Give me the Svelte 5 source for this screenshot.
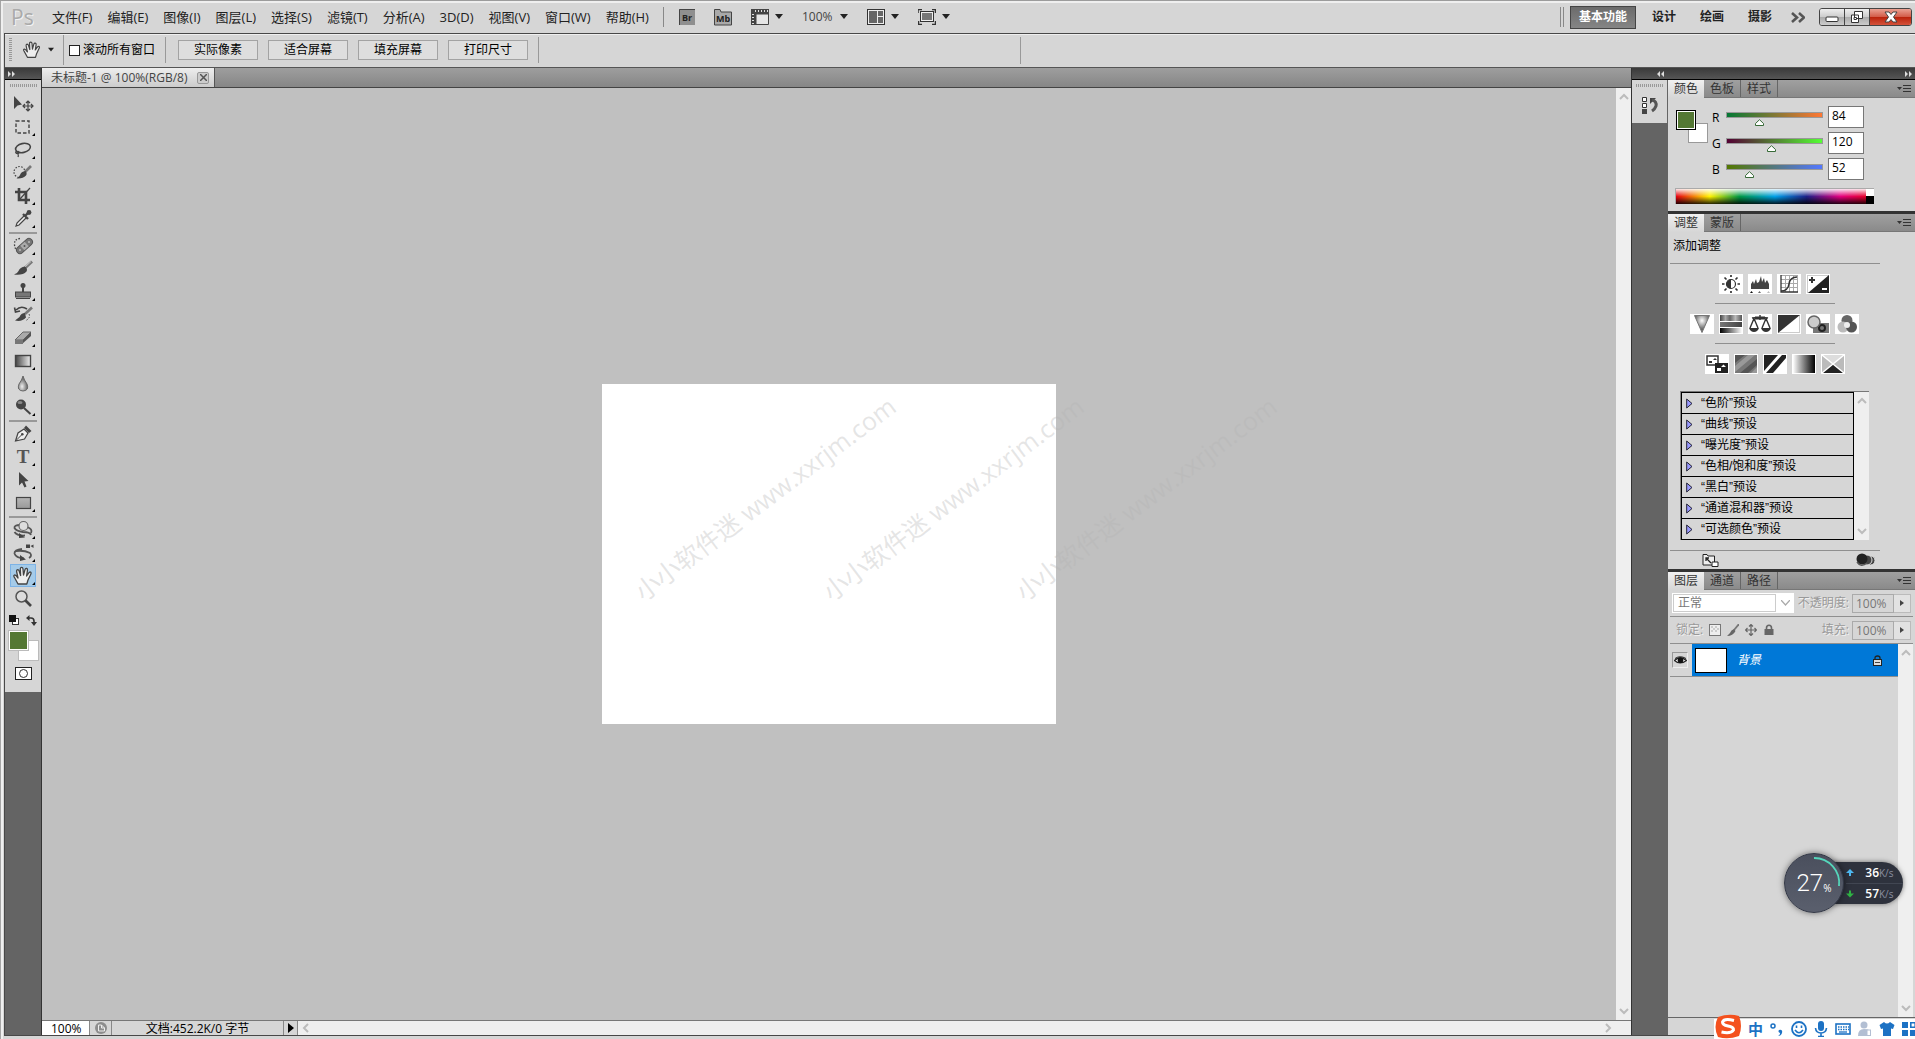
<script>
  const menus = ['文件(F)', '编辑(E)', '图像(I)', '图层(L)', '选择(S)', '滤镜(T)', '分析(A)', '3D(D)', '视图(V)', '窗口(W)', '帮助(H)'];
  const viewButtons = ['实际像素', '适合屏幕', '填充屏幕', '打印尺寸'];
  const workspaces = ['设计', '绘画', '摄影'];
  const presets = ['色阶', '曲线', '曝光度', '色相/饱和度', '黑白', '通道混和器', '可选颜色'];
  const watermarks = [1, 2, 3];

  let channels = $state([
    { name: 'R', value: 84, from: '#047834', to: '#ff7834' },
    { name: 'G', value: 120, from: '#540034', to: '#54ff34' },
    { name: 'B', value: 52, from: '#547800', to: '#5478ff' }
  ]);

  const dark = '#444';
  const hand = `<path d="M7 20 L3.5 13.5 Q2 11.5 3.6 11 Q5 10.8 6.5 13.5 L7 14 L5.6 7.5 Q5.4 5.8 6.6 5.6 Q7.8 5.6 8.2 7.2 L9.6 11.5 L9.3 5 Q9.3 3.4 10.6 3.4 Q11.9 3.4 12 5 L12.5 11 L14 5.6 Q14.5 4.2 15.6 4.5 Q16.7 4.8 16.5 6.2 L15.6 12 L18 8.6 Q19 7.6 19.8 8.2 Q20.5 9 19.8 10.2 L17 16 L15.8 20 Z" fill="#eee" stroke="${dark}" stroke-width="1.3" stroke-linejoin="round"/>`;

  const groups = [
    [
      { id: 'move', label: '移动工具', solo: true, art: `<path d="M3 4 L3 17 L6.5 13.5 L11 12.5 Z" fill="${dark}"/><path d="M17 9 V19 M12 14 H22 M15 11 L17 9 L19 11 M15 17 L17 19 L19 17 M14 12 L12 14 L14 16 M20 12 L22 14 L20 16" fill="none" stroke="${dark}" stroke-width="1.2"/>` },
      { id: 'marquee', label: '矩形选框工具', art: `<rect x="5" y="6" width="13" height="12" fill="none" stroke="${dark}" stroke-width="1.4" stroke-dasharray="3.5 2"/>` },
      { id: 'lasso', label: '套索工具', art: `<ellipse cx="12" cy="10" rx="7.5" ry="4.5" transform="rotate(-12 12 10)" fill="none" stroke="${dark}" stroke-width="1.6"/><path d="M6 13 Q3.5 14 5.5 15.5 Q8 16 8 14 Q7 12.5 6 14 Q8 17 7 19" fill="none" stroke="${dark}" stroke-width="1.2"/>` },
      { id: 'quick', label: '快速选择工具', art: `<circle cx="8.5" cy="11" r="5.5" fill="none" stroke="${dark}" stroke-width="1.2" stroke-dasharray="1.5 1.5"/><path d="M20 5 L14 11" stroke="#777" stroke-width="2.6"/><path d="M14.5 10 Q10 10.5 9 14 Q8 16.5 5.5 17.5 Q12 18 15 14.5 Q16.5 12.5 14.5 10Z" fill="${dark}"/>` },
      { id: 'crop', label: '裁剪工具', art: `<path d="M8 4 V16 H19 M4 8 H15 V20" fill="none" stroke="${dark}" stroke-width="2.6"/><path d="M9 15 L19 4" stroke="${dark}" stroke-width="1.2"/>` },
      { id: 'eyedropper', label: '吸管工具', art: `<path d="M13 9 L6 16 L5 19 L8 18 L15 11" fill="#eee" stroke="${dark}" stroke-width="1.2"/><path d="M12 7 L17 12 M14 9 L17.5 5.5" stroke="${dark}" stroke-width="2.4"/><circle cx="18" cy="5.5" r="2.4" fill="${dark}"/>` }
    ],
    [
      { id: 'heal', label: '污点修复画笔工具', art: `<path d="M9 4.5 Q3 5 3.5 11 Q4 15 6 16.5" fill="none" stroke="${dark}" stroke-width="1.3" stroke-dasharray="1.5 1.5"/><rect x="4" y="8.5" width="19" height="7" rx="3.5" transform="rotate(-42 13.5 12)" fill="#777" stroke="#555"/><rect x="10.5" y="9" width="6" height="6" transform="rotate(-42 13.5 12)" fill="#aaa"/><circle cx="9" cy="16" r="1" fill="#bbb"/><circle cx="18" cy="8" r="1" fill="#bbb"/><circle cx="13.5" cy="12" r="1" fill="#555"/>` },
      { id: 'brush', label: '画笔工具', art: `<path d="M21 4.5 L14 11" stroke="#777" stroke-width="3"/><path d="M20 4.5 L14 10" stroke="#ccc" stroke-width="1"/><path d="M14 9.5 Q9 10 7.5 14 Q6.5 16.5 3 17.5 Q12 18.5 15.5 14.5 Q17 12 14 9.5Z" fill="${dark}"/>` },
      { id: 'stamp', label: '仿制图章工具', art: `<circle cx="12" cy="5.5" r="2.5" fill="${dark}"/><path d="M11 7 H13 V12 H11Z" fill="${dark}"/><rect x="4.5" y="12" width="15" height="5" fill="#777" stroke="${dark}"/><path d="M5 18.5 H19" stroke="${dark}"/>` },
      { id: 'history', label: '历史记录画笔工具', art: `<path d="M5 7 Q10 2 16 6 M3.5 4.5 L4.5 9 L9 8" fill="none" stroke="${dark}" stroke-width="1.6"/><path d="M21 4.5 L14 11" stroke="#777" stroke-width="2.6"/><path d="M14 10 Q10 10 8.5 14 L4 17.5 Q11 19 15 14.5Z" fill="${dark}"/><path d="M18 11 Q20 15 14 18" fill="none" stroke="${dark}" stroke-dasharray="1.5 1.5"/>` },
      { id: 'eraser', label: '橡皮擦工具', art: `<path d="M4 14 L12 6 H20 L12 14 Z" fill="#aaa" stroke="#666"/><path d="M4 14 V18 H11 L20 10 V6 L12 14Z" fill="#555"/><path d="M4 14 H12 V18 H4Z" fill="#777"/>` },
      { id: 'gradient', label: '渐变工具', art: `<defs><linearGradient id="tg"><stop offset="0" stop-color="#444"/><stop offset="1" stop-color="#eee"/></linearGradient></defs><rect x="4.5" y="6.5" width="15" height="11" fill="url(#tg)" stroke="${dark}" stroke-width="1.4"/>` },
      { id: 'blur', label: '模糊工具', art: `<defs><radialGradient id="tb" cx=".4" cy=".7"><stop offset="0" stop-color="#eee"/><stop offset="1" stop-color="#777"/></radialGradient></defs><path d="M12 4 Q13 8 16 12 Q18.5 18.5 12 19 Q5.5 18.5 8 12 Q11 8 12 4Z" fill="url(#tb)" stroke="#666"/>` },
      { id: 'dodge', label: '减淡工具', art: `<circle cx="10" cy="9.5" r="5" fill="${dark}"/><path d="M13 13 L19.5 19" stroke="${dark}" stroke-width="2"/><ellipse cx="9" cy="7.5" rx="2.5" ry="1.5" fill="#888"/>` }
    ],
    [
      { id: 'pen', label: '钢笔工具', art: `<path d="M4.5 19 L7 11 L13 7 L17 11 L13.5 17 Z" fill="#eee" stroke="${dark}" stroke-width="1.2"/><path d="M5 18.5 L11 12.5" stroke="${dark}"/><circle cx="11.3" cy="12.3" r="1.3" fill="${dark}"/><path d="M13 6 L15 3.5 L20.5 9 L18 11 Z" fill="${dark}"/>` },
      { id: 'type', label: '横排文字工具', text: 'T' },
      { id: 'path', label: '路径选择工具', art: `<path d="M8 4 L8 17.5 L11 14.5 L13.5 19.5 L15.5 18.5 L13.5 13.5 L17.5 13 Z" fill="${dark}"/>` },
      { id: 'shape', label: '矩形工具', art: `<defs><linearGradient id="ts" x2="0" y2="1"><stop offset="0" stop-color="#b5b5b5"/><stop offset="1" stop-color="#999"/></linearGradient></defs><rect x="5.5" y="6.5" width="14" height="11" fill="url(#ts)" stroke="${dark}" stroke-width="1.2"/>` }
    ],
    [
      { id: 'rotate3d', label: '3D 旋转工具', art: `<path d="M9 7 Q3 7 3.5 10 Q5 13 12 14 Q19 14 20 17 M16 9 Q22 11 20 15 M14 17.5 Q6 18 3.5 14" fill="none" stroke="#555" stroke-width="1.8"/><circle cx="12.5" cy="8" r="4.5" fill="#ddd" stroke="#666" stroke-width="1.2"/><path d="M8 15 L14 19.5 L8 20 Z" fill="${dark}"/>` },
      { id: 'orbit3d', label: '3D 环绕工具', art: `<path d="M11 8 Q3 9 3.5 12.5 Q5 17 13 17.5 M5 10 Q13 9 19 12 Q21.5 15 18 17" fill="none" stroke="#555" stroke-width="1.8"/><path d="M15 3.5 H19 V7 H15Z M19.5 5 L22.5 3.5 V7Z" fill="${dark}"/><path d="M9 14 L15 18.5 L9 20Z" fill="${dark}"/>` },
      { id: 'hand', label: '抓手工具', active: true, art: hand },
      { id: 'zoom', label: '缩放工具', solo: true, art: `<circle cx="10.5" cy="9.5" r="5.5" fill="#ddd" stroke="#555" stroke-width="1.5"/><path d="M14.5 13.5 L20 19" stroke="${dark}" stroke-width="2.6"/>` }
    ]
  ];

  const adjustments = [
    [
      { label: '亮度/对比度', art: `<circle cx="12" cy="10" r="4.5" fill="#fff" stroke="#333" stroke-width="1.2"/><path d="M12 5.5 A4.5 4.5 0 0 0 12 14.5Z" fill="#333"/><path d="M12 1 V3 M12 17 V19 M3 10 H5.5 M18.5 10 H21 M5.5 3.5 L7.5 5.5 M16.5 14.5 L18.5 16.5 M18.5 3.5 L16.5 5.5 M7.5 14.5 L5.5 16.5" stroke="#333" stroke-width="1.7"/>` },
      { label: '色阶', art: `<path d="M3 15 V10 L5 7 L6 10 L8 5 L9 9 L11 8 L13 2 L14 8 L16 4 L17 9 L19 6 L21 10 V15Z" fill="#444"/><path d="M2 19 L3.5 17 L5 19Z" fill="#111"/><path d="M10 19 L11.5 17 L13 19Z" fill="#666"/><path d="M19 19 L20.5 17 L22 19Z" fill="#bbb"/>` },
      { label: '曲线', art: `<path d="M4 1.5 H21 M4 5.5 H21 M4 9.5 H21 M4 13.5 H21 M8.5 1 V18 M12.5 1 V18 M16.5 1 V18 M20.5 1 V18" stroke="#aaa"/><path d="M4 1 V18 H21" fill="none" stroke="#333" stroke-width="1.3"/><path d="M4 17 Q11 17 12 10 Q13 3 20 3" fill="none" stroke="#333" stroke-width="1.5"/>` },
      { label: '曝光度', art: `<rect x="1.5" y="1.5" width="21" height="17" fill="#fff" stroke="#ccc"/><path d="M2 19 L23 1 V19Z" fill="#222"/><path d="M3 6 H9 M6 3 V9" stroke="#333" stroke-width="2"/><path d="M16 15 H21" stroke="#fff" stroke-width="2"/>` }
    ],
    [
      { label: '自然饱和度', art: `<defs><radialGradient id="av" cy=".3"><stop offset="0" stop-color="#fff"/><stop offset="1" stop-color="#666"/></radialGradient></defs><path d="M4.5 1.5 H19.5 L12 18.5Z" fill="url(#av)" stroke="#777"/>` },
      { label: '色相/饱和度', art: `<defs><linearGradient id="ah"><stop offset="0" stop-color="#444"/><stop offset=".25" stop-color="#aaa"/><stop offset=".45" stop-color="#666"/><stop offset=".7" stop-color="#bbb"/><stop offset="1" stop-color="#555"/></linearGradient><linearGradient id="ah2"><stop offset="0" stop-color="#777"/><stop offset="1" stop-color="#444"/></linearGradient><linearGradient id="ah3"><stop offset="0" stop-color="#000"/><stop offset="1" stop-color="#fff"/></linearGradient></defs><rect x="1" y="1" width="22" height="6" fill="url(#ah)"/><rect x="1" y="8" width="22" height="5" fill="url(#ah2)"/><rect x="1" y="14" width="22" height="5" fill="url(#ah3)"/>` },
      { label: '色彩平衡', art: `<path d="M12 1 V6 M4 4 Q8 3 12 4.5 Q16 3 20 4 M6 4.5 L2 14 M6 4.5 L10 14 M18 4.5 L14 14 M18 4.5 L22 14" fill="none" stroke="#333" stroke-width="1.4"/><path d="M7 4 H17" stroke="#333" stroke-width="3"/><path d="M1 14 H11 Q9.5 18 6 18 Q2.5 18 1 14Z M13 14 H23 Q21.5 18 18 18 Q14.5 18 13 14Z" fill="#333"/>` },
      { label: '黑白', art: `<rect x="1.5" y="1.5" width="21" height="17" fill="#fff" stroke="#ccc"/><path d="M1 1 H23 L1 19Z" fill="#333"/>` },
      { label: '照片滤镜', art: `<rect x="7" y="9" width="16" height="10" fill="#777"/><circle cx="16" cy="14" r="4" fill="#222"/><circle cx="16" cy="14" r="2" fill="#777"/><circle cx="8" cy="8" r="6" fill="#ccc" stroke="#666" stroke-width="1.5"/>` },
      { label: '通道混和器', art: `<circle cx="12" cy="6.5" r="5.5" fill="#666"/><circle cx="8" cy="13" r="5.5" fill="#bbb"/><circle cx="16.5" cy="13" r="5.5" fill="#555"/><circle cx="12" cy="11" r="3" fill="#eee"/>` }
    ],
    [
      { label: '反相', art: `<rect x="2" y="2" width="11" height="9" fill="#fff" stroke="#333" stroke-width="1.5"/><path d="M4 9 V7 H7 V9Z M8 6 L10 4 L12 6Z" fill="#333"/><rect x="10" y="9" width="13" height="10" fill="#222"/><path d="M12 17 V14 H16 V17Z M16 13 L18.5 10.5 L21 13Z" fill="#fff"/>` },
      { label: '色调分离', art: `<path d="M1 1 H23 V19 H1Z" fill="#777"/><path d="M1 1 H11 L1 9Z M23 5 L6 19 H14 L23 11Z" fill="#555"/><path d="M14 1 H21 L1 18 V12Z M23 13 V19 H17Z" fill="#999"/>` },
      { label: '阈值', art: `<path d="M1 1 H15 L1 17Z M19 1 H23 V4 L10 19 H3 Z" fill="#222"/>` },
      { label: '渐变映射', art: `<defs><linearGradient id="am"><stop offset="0" stop-color="#fff"/><stop offset="1" stop-color="#000"/></linearGradient></defs><rect x="1" y="1" width="22" height="18" fill="url(#am)"/>` },
      { label: '可选颜色', art: `<path d="M1 1 H23 V19 H1Z" fill="#bbb"/><path d="M1 1 H23 L12 10Z" fill="#ddd"/><path d="M1 19 H23 L12 10Z" fill="#222"/><path d="M1 1 L23 19 M23 1 L1 19" stroke="#fff" stroke-width="1.5"/>` }
    ]
  ];

  const ime = [
    { label: '标点', art: `<circle cx="4" cy="5" r="2" fill="none" stroke="#1d72c4" stroke-width="1.5"/><path d="M10 9 Q14 8 13 12 Q12 15 9 15 Q11.5 13.5 11 12 Q8.5 11 10 9Z" fill="#1d72c4"/>` },
    { label: '表情', art: `<circle cx="8" cy="8" r="7" fill="none" stroke="#1d72c4" stroke-width="1.8"/><path d="M5.5 4.5 V7 M10.5 4.5 V7 M4 9 Q8 14.5 12 9" fill="none" stroke="#1d72c4" stroke-width="1.6"/>` },
    { label: '语音', art: `<rect x="5" y="0" width="6" height="10" rx="3" fill="#1d72c4"/><path d="M2.5 7 Q3 12 8 12 Q13 12 13.5 7 M8 12 V15 M5 15.5 H11" fill="none" stroke="#1d72c4" stroke-width="1.6"/>` },
    { label: '软键盘', art: `<rect x="1" y="3" width="14" height="10" fill="none" stroke="#1d72c4" stroke-width="1.6"/><path d="M3 6 H14 M3 8.5 H14" stroke="#1d72c4" stroke-width="1.5" stroke-dasharray="1.5 1"/><path d="M4 11 H12" stroke="#1d72c4" stroke-width="1.3"/>` },
    { label: '用户', art: `<circle cx="7" cy="4" r="3.5" fill="#b3bfd3"/><path d="M1 15 Q1 8 7 8 Q11 8 12 9 V15Z" fill="#b3bfd3"/><rect x="10" y="9" width="3.5" height="5.5" fill="#fff" stroke="#b3bfd3"/>` },
    { label: '皮肤', art: `<path d="M5 1 Q8 4 11 1 L15.5 4 L14 8 L12 7.5 V15 H4 V7.5 L2 8 L0.5 4Z" fill="#1d72c4"/>` },
    { label: '工具箱', art: `<path d="M1 1 H7 V7 H1Z M1 9 H7 V15 H1Z M9 9 H15 V15 H9Z" fill="#1d72c4"/><path d="M9.8 1.8 H14.2 V6.2 H9.8Z" fill="none" stroke="#1d72c4" stroke-width="1.6"/>` }
  ];
</script>

{#snippet caret()}
  <svg class="caret" viewBox="0 0 8 6" aria-hidden="true"><path d="M0 0 H8 L4 5Z" fill="#222" /></svg>
{/snippet}

{#snippet chevron(d)}
  <svg class="chev" viewBox="0 0 10 10" aria-hidden="true"><path {d} fill="none" stroke="#bcbcbc" stroke-width="2" /></svg>
{/snippet}

{#snippet tabs(names)}
  <div class="tabs" role="tablist">
    {#each names as name, i}
      <button role="tab" aria-selected={i === 0} class:on={i === 0}>{name}</button>
    {/each}
    <button class="panel-menu" aria-label="面板菜单">
      <svg viewBox="0 0 14 8"><path d="M0 2 H5 L2.5 5Z" fill="#333" /><path d="M6 .5 H14 M6 3.5 H14 M6 6.5 H14" stroke="#333" /></svg>
    </button>
  </div>
{/snippet}

<div class="app">
  <header class="menubar">
    <span class="logo">Ps</span>
    <nav class="menus">
      {#each menus as m}<button>{m}</button>{/each}
    </nav>
    <div class="quick">
      <button aria-label="Bridge"><svg width="16" height="16" viewBox="0 0 16 16"><rect width="16" height="16" fill="#8f8f8f" /><path d="M.5 16 V.5 H16" fill="none" stroke="#444" /><text x="3" y="12" class="mini">Br</text></svg></button>
      <button aria-label="Mini Bridge"><svg width="18" height="17" viewBox="0 0 18 17"><path d="M.5 16 V.5 H6 L7 3 H17.5 V16Z" fill="#a9a9a9" stroke="#444" /><text x="2" y="13" class="mini">Mb</text></svg></button>
      <button class="drop" aria-label="查看额外内容"><svg width="18" height="16" viewBox="0 0 18 16"><path d="M0 0 H18 V5 H5 V16 H0Z" fill="#444" /><path d="M5 5 H17.5 V15.5 H5Z" fill="#e6e6e6" stroke="#444" /><path d="M4 2 H17" stroke="#ddd" stroke-width="2" stroke-dasharray="1 2" /><path d="M2 5 V16" stroke="#ddd" stroke-width="2" stroke-dasharray="1 2" /></svg>{@render caret()}</button>
      <button class="drop zoomlevel">100%{@render caret()}</button>
      <button class="drop" aria-label="排列文档"><svg width="18" height="16" viewBox="0 0 18 16"><rect x=".5" y=".5" width="17" height="15" fill="#eee" stroke="#333" /><path d="M2 2 H10 V14 H2Z M11 2 H16 V7 H11Z M11 8 H16 V14 H11Z" fill="#666" /></svg>{@render caret()}</button>
      <button class="drop" aria-label="屏幕模式"><svg width="18" height="16" viewBox="0 0 18 16"><path d="M0 4 V.5 H4 M14 .5 H17.5 V4 M17.5 12 V15.5 H14 M4 15.5 H.5 V12" fill="none" stroke="#333" stroke-width="1.5" /><rect x="2.5" y="2.5" width="13" height="10" fill="#eee" stroke="#333" /><rect x="4" y="4" width="10" height="7" fill="#777" /></svg>{@render caret()}</button>
    </div>
    <div class="modes">
      <span class="double"></span>
      <button class="current">基本功能</button>
      {#each workspaces as w}<button class="ws">{w}</button>{/each}
      <button class="more" aria-label="更多工作区"><svg width="14" height="11" viewBox="0 0 14 11"><path d="M1 1 L6 5.5 L1 10 M8 1 L13 5.5 L8 10" fill="none" stroke="#555" stroke-width="2.6" /></svg></button>
      <div class="window">
        <button aria-label="最小化"><svg width="14" height="12" viewBox="0 0 14 12"><rect x="1" y="6" width="12" height="4.5" rx="1" fill="#fff" stroke="#333" /></svg></button>
        <button aria-label="还原"><svg width="14" height="12" viewBox="0 0 14 12"><path d="M4.5 .5 H12.5 V7.5 H4.5Z M1.5 4 H8.5 V11.5 H1.5Z" fill="#fff" stroke="#333" /><path d="M4 6.5 H6.5 V8.5 H4Z" fill="#fff" stroke="#333" /></svg></button>
        <button class="close" aria-label="关闭"><svg width="14" height="12" viewBox="0 0 14 12"><path d="M1 1 H5 L7 3.5 L9 1 H13 L9.5 6 L13 11 H9 L7 8.5 L5 11 H1 L4.5 6Z" fill="#fff" stroke="#444" /></svg></button>
      </div>
    </div>
  </header>

  <div class="frame">
    <div class="options">
      <span class="vgrip"></span>
      <button class="handbtn" aria-label="抓手工具"><svg width="22" height="22" viewBox="0 0 24 24">{@html hand}</svg>{@render caret()}</button>
      <label class="scrollall"><input type="checkbox" />滚动所有窗口</label>
      <div class="fits">
        {#each viewButtons as b}<button>{b}</button>{/each}
      </div>
      <span class="endrule"></span>
    </div>

    <div class="workspace">
      <aside class="toolcol">
        <div class="dockhead"><svg width="7" height="6" viewBox="0 0 7 6"><path d="M0 0 L3 3 L0 6Z M4 0 L7 3 L4 6Z" fill="#ddd" /></svg></div>
        <div class="toolbox">
          <span class="hgrip"></span>
          {#each groups as group}
            <div class="group">
              {#each group as tool}
                <button class="tool" class:active={tool.active} aria-label={tool.label}>
                  {#if tool.text}<span class="t">{tool.text}</span>{:else}<svg width="24" height="23" viewBox="0 0 24 23">{@html tool.art}</svg>{/if}
                  {#if !tool.solo}<svg class="corner" width="3" height="3" viewBox="0 0 3 3"><path d="M3 0 V3 H0Z" fill="#000" /></svg>{/if}
                </button>
              {/each}
            </div>
          {/each}
          <div class="minis">
            <button aria-label="默认颜色"><svg width="11" height="11" viewBox="0 0 11 11"><rect x="3.5" y="3.5" width="6" height="6" fill="#fff" stroke="#333" /><rect width="7" height="7" fill="#111" /></svg></button>
            <button aria-label="切换颜色"><svg width="11" height="11" viewBox="0 0 11 11"><path d="M2 3 H5 Q8 3 8 6 V8" fill="none" stroke="#333" stroke-width="1.6" /><path d="M0 3 L3.5 0 V6Z M5 7 H11 L8 11Z" fill="#333" /></svg></button>
          </div>
          <div class="swatches">
            <button class="bg" aria-label="背景色"></button>
            <button class="fg" aria-label="前景色"></button>
          </div>
          <button class="qmask" aria-label="快速蒙版"><svg width="17" height="13" viewBox="0 0 17 13"><rect x=".5" y=".5" width="16" height="12" fill="#fff" stroke="#222" /><circle cx="8.5" cy="6.5" r="4" fill="#fff" stroke="#333" /></svg></button>
        </div>
      </aside>

      <main class="doc">
        <div class="doctabs">
          <div class="doctab">未标题-1 @ 100%(RGB/8)
            <button aria-label="关闭文档"><svg width="7" height="7" viewBox="0 0 7 7"><path d="M0 0 L7 7 M7 0 L0 7" stroke="#555" stroke-width="1.5" /></svg></button>
          </div>
        </div>
        <div class="view">
          <div class="canvas">
            <div class="paper">
              {#each watermarks as n}<span class="wm wm{n}">小小软件迷 www.xxrjm.com</span>{/each}
            </div>
          </div>
          <div class="vscroll">{@render chevron('M1 7 L5 3 L9 7')}{@render chevron('M1 3 L5 7 L9 3')}</div>
        </div>
        <footer class="status">
          <input class="pct" aria-label="缩放比例" value="100%" />
          <button class="info" aria-label="版本"><svg width="12" height="12" viewBox="0 0 12 12"><circle cx="6" cy="6" r="6" fill="#8d8d8d" /><path d="M3.5 3 H6.5 L9.5 6 V9 H3.5Z M6.5 3 V6 H9.5" fill="none" stroke="#eee" /></svg></button>
          <span class="size">文档:452.2K/0 字节</span>
          <button class="play" aria-label="显示"><svg width="6" height="10" viewBox="0 0 6 10"><path d="M0 0 L6 5 L0 10Z" fill="#000" /></svg></button>
          <div class="hscroll">{@render chevron('M7 1 L3 5 L7 9')}{@render chevron('M3 1 L7 5 L3 9')}</div>
        </footer>
      </main>

      <aside class="icondock">
        <div class="dockhead right"><svg width="7" height="6" viewBox="0 0 7 6"><path d="M3 0 L0 3 L3 6Z M7 0 L4 3 L7 6Z" fill="#ddd" /></svg></div>
        <div class="dockbox">
          <span class="hgrip"></span>
          <button aria-label="历史记录"><svg width="18" height="18" viewBox="0 0 18 18"><path d="M1.5 1.5 H5.5 V5.5 H1.5Z M1.5 7.5 H5.5 V11.5 H1.5Z" fill="#fff" stroke="#333" /><path d="M1 13 H6 V18 H1Z" fill="#444" /><path d="M9 8 V2 H15 Z" fill="#444" /><path d="M11 4 Q16 5 15 10 Q14 13 11 15" fill="none" stroke="#555" stroke-width="3" /></svg></button>
        </div>
      </aside>

      <aside class="panels">
        <div class="dockhead right"><svg width="7" height="6" viewBox="0 0 7 6"><path d="M0 0 L3 3 L0 6Z M4 0 L7 3 L4 6Z" fill="#ddd" /></svg></div>
        <section class="panel">
          {@render tabs(['颜色', '色板', '样式'])}
          <div class="colorbody">
            <div class="swpair"><button class="cbg" aria-label="背景色"></button><button class="cfg" aria-label="前景色"></button></div>
            <div class="sliders">
              {#each channels as c}
                <label class="channel">
                  <span>{c.name}</span>
                  <input type="range" min="0" max="255" bind:value={c.value} style:--from={c.from} style:--to={c.to} aria-label="{c.name} 滑块" />
                  <input type="text" bind:value={c.value} />
                </label>
              {/each}
            </div>
          </div>
          <div class="spectrum"><span></span></div>
        </section>

        <section class="panel">
          {@render tabs(['调整', '蒙版'])}
          <div class="adjust">
            <h2>添加调整</h2>
            {#each adjustments as row}
              <div class="adjrow">
                {#each row as a}
                  <button aria-label={a.label}><svg width="24" height="20" viewBox="0 0 24 20">{@html a.art}</svg></button>
                {/each}
              </div>
            {/each}
            <div class="presets">
              <ul>
                {#each presets as p}
                  <li><svg width="7" height="11" viewBox="0 0 7 11"><path d="M.7 1 L6 5.5 L.7 10Z" fill="#99f" stroke="#223" /></svg>“{p}”预设</li>
                {/each}
              </ul>
              <div class="pscroll">{@render chevron('M1 7 L5 3 L9 7')}{@render chevron('M1 3 L5 7 L9 3')}</div>
            </div>
            <div class="adjfoot">
              <button aria-label="展开视图"><svg width="17" height="14" viewBox="0 0 17 14"><path d="M1 12 V1.5 H5 L6 3 H12.5 V12Z" fill="#eee" stroke="#222" /><path d="M4 5 L9 10 M4 8 V5 H7" fill="none" stroke="#222" stroke-width="1.3" /><path d="M10 9 H16 V13.5 H10Z" fill="#fff" stroke="#222" /></svg></button>
              <button aria-label="剪切到图层"><svg width="20" height="14" viewBox="0 0 20 14"><circle cx="14.5" cy="7.5" r="4.5" fill="#444" stroke="#ddd" /><circle cx="11" cy="7" r="5" fill="#444" stroke="#ddd" /><circle cx="6" cy="6" r="5.5" fill="#222" /><path d="M1 9 Q5 15 11 10" fill="none" stroke="#555" stroke-width="1.5" /></svg></button>
            </div>
          </div>
        </section>

        <section class="panel layers">
          {@render tabs(['图层', '通道', '路径'])}
          <div class="lrow">
            <div class="blend">
              <select disabled aria-label="混合模式"><option>正常</option></select>
              <svg width="9" height="6" viewBox="0 0 9 6"><path d="M0 0 L4.5 5 L9 0" fill="none" stroke="#aaa" stroke-width="1.3" /></svg>
            </div>
            <label class="amount">不透明度:<input value="100%" disabled /><button disabled aria-label="不透明度滑块"><svg width="4" height="6" viewBox="0 0 4 6"><path d="M0 0 L4 3 L0 6Z" fill="#444" /></svg></button></label>
          </div>
          <div class="lrow">
            <div class="locks">锁定:
              <button aria-label="锁定透明像素"><svg width="12" height="12" viewBox="0 0 12 12"><rect x=".5" y=".5" width="11" height="11" fill="#eee" stroke="#777" /><path d="M2 2 H4 V4 H2Z M6 2 H8 V4 H6Z M4 4 H6 V6 H4Z M8 4 H10 V6 H8Z M2 6 H4 V8 H2Z M6 6 H8 V8 H6Z" fill="#ccc" /></svg></button>
              <button aria-label="锁定图像像素"><svg width="12" height="12" viewBox="0 0 12 12"><path d="M12 0 L7 6" stroke="#777" stroke-width="1.8" /><path d="M7 5 Q4 6 3 9 L0 12 Q6 12 8.5 7Z" fill="#666" /></svg></button>
              <button aria-label="锁定位置"><svg width="12" height="12" viewBox="0 0 12 12"><path d="M6 1 V11 M1 6 H11 M4 2.5 L6 .5 L8 2.5 M4 9.5 L6 11.5 L8 9.5 M2.5 4 L.5 6 L2.5 8 M9.5 4 L11.5 6 L9.5 8" fill="none" stroke="#666" stroke-width="1.2" /></svg></button>
              <button aria-label="锁定全部"><svg width="12" height="12" viewBox="0 0 12 12"><path d="M3.5 6 V4 Q3.5 1.2 6 1.2 Q8.5 1.2 8.5 4 V6" fill="none" stroke="#666" stroke-width="1.6" /><rect x="1.5" y="5" width="9" height="6" fill="#666" /></svg></button>
            </div>
            <label class="amount">填充:<input value="100%" disabled /><button disabled aria-label="填充滑块"><svg width="4" height="6" viewBox="0 0 4 6"><path d="M0 0 L4 3 L0 6Z" fill="#444" /></svg></button></label>
          </div>
          <div class="layerlist">
            <div class="rows">
              <div class="layer">
                <button class="eye" aria-label="可见性"><svg width="13" height="9" viewBox="0 0 13 9"><path d="M.5 4.5 Q6 -1 12.5 4.5 Q6 9.5 .5 4.5Z" fill="#fff" stroke="#222" stroke-width="1.2" /><circle cx="6.5" cy="4.3" r="2.8" fill="#111" /><path d="M1 2.5 Q6 -1 12 2.5" fill="none" stroke="#222" /></svg></button>
                <div class="selected">
                  <span class="thumb"></span>
                  <em>背景</em>
                  <svg width="9" height="11" viewBox="0 0 9 11"><path d="M2 5 V3 Q2 1 4.5 1 Q7 1 7 3 V5" fill="none" stroke="#222" stroke-width="1.3" /><rect x=".5" y="4.5" width="8" height="6" fill="#ddd" stroke="#222" /><path d="M2 7.5 H7" stroke="#444" /></svg>
                </div>
              </div>
            </div>
            <div class="lscroll">{@render chevron('M1 7 L5 3 L9 7')}{@render chevron('M1 3 L5 7 L9 3')}</div>
          </div>
        </section>
      </aside>
    </div>
  </div>

  <div class="monitor">
    <div class="pill">
      <p><svg width="8" height="8" viewBox="0 0 8 8"><path d="M4 0 L8 4 H5 V7 H3 V4 H0Z" fill="#4db8f0" /></svg><b>36</b><span>K/s</span></p>
      <p><svg width="8" height="8" viewBox="0 0 8 8"><path d="M4 7.5 L0 3.5 H3 V.5 H5 V3.5 H8Z" fill="#2fb344" /></svg><b>57</b><span>K/s</span></p>
    </div>
    <div class="disc">
      <svg viewBox="0 0 60 60"><path d="M30 5 A25 25 0 0 1 55 33" fill="none" stroke="#55d6bb" stroke-width="1.8" /></svg>
      <strong>27</strong><small>%</small>
    </div>
  </div>

  <div class="ime">
    <svg class="sogou" width="28" height="25" viewBox="0 0 28 25"><path d="M4 3 Q15 -1 25 2 Q29 12 25 22 Q14 26 4 23 Q-1 13 4 3Z" fill="#f4511e" /><path d="M20 6.5 Q10 4 8.5 8 Q8.5 11 14 12 Q20 13 19.5 16 Q17 20 7.5 18" fill="none" stroke="#fff" stroke-width="3" /></svg>
    <button class="zh">中</button>
    {#each ime as item}
      <button aria-label={item.label}><svg width="16" height="16" viewBox="0 0 16 16">{@html item.art}</svg></button>
    {/each}
  </div>
</div>

<style>
  :global(body) {
    background: #d6d6d6;
  }
  .app {
    --face: #d6d6d6;
    --line: #8f8f8f;
    box-sizing: border-box;
    display: flex;
    flex-direction: column;
    height: 100vh;
    min-height: 800px;
    padding: 0 0 3px 4px;
    border-top: 1px solid #9c9c9c;
    background: var(--face);
    box-shadow: inset 1px 0 #a5a5a5, inset 3px 2px #efefef;
    font: 12px/16px 'Open Sans', 'Noto Sans CJK SC', sans-serif;
    color: #222;
    position: relative;
    overflow: hidden;
  }
  .app :global(*) {
    box-sizing: border-box;
  }
  button {
    padding: 0;
    border: 0;
    background: none;
    font: inherit;
    color: inherit;
  }
  input,
  select {
    font: inherit;
    border-radius: 0;
    margin: 0;
  }
  svg {
    display: block;
    flex: none;
  }
  .caret {
    width: 8px;
    height: 6px;
  }
  .chev {
    width: 10px;
    height: 10px;
  }

  /* menu bar */
  .menubar {
    display: flex;
    align-items: center;
    height: 32px;
    flex: none;
  }
  .logo {
    width: 48px;
    padding-left: 7px;
    font-size: 21px;
    line-height: 30px;
    color: #aaa;
    text-shadow: 1px 1px #f2f2f2;
  }
  .menus {
    display: flex;
    gap: 15px;
    white-space: nowrap;
    font-size: 13px;
  }
  .quick {
    display: flex;
    align-items: center;
    gap: 19px;
    height: 20px;
    margin-left: 14px;
    padding-left: 15px;
    border-left: 1px solid #888;
  }
  .mini {
    font: bold 9px 'Open Sans', sans-serif;
    fill: #222;
  }
  .drop {
    display: flex;
    align-items: center;
    gap: 6px;
  }
  .zoomlevel {
    gap: 8px;
    color: #444;
  }
  .modes {
    display: flex;
    align-items: center;
    margin-left: auto;
    padding-right: 3px;
    font-weight: 700;
  }
  .double {
    width: 4px;
    height: 20px;
    border: solid #888;
    border-width: 0 1px;
    margin-right: 6px;
  }
  .current {
    width: 66px;
    height: 23px;
    border: 1px solid #444;
    background: linear-gradient(#6b6b6b, #858585);
    color: #fff;
    margin-right: 4px;
  }
  .ws {
    width: 48px;
  }
  .more {
    margin: 0 14px 0 7px;
  }
  .window {
    display: flex;
    height: 18px;
    border: 1px solid #444;
    border-radius: 3px;
    overflow: hidden;
  }
  .window button {
    display: grid;
    place-items: center;
    width: 25px;
    border-right: 1px solid #444;
    background: linear-gradient(#eee, #ccc 50%, #aaa 50%, #ccc);
  }
  .window .close {
    width: 41px;
    border: 0;
    background: linear-gradient(#eaa193, #d25a47 50%, #b9210a 50%, #d4523a);
  }

  /* options bar */
  .frame {
    display: flex;
    flex-direction: column;
    flex: 1;
    min-height: 0;
    border: solid #484848;
    border-width: 1px 0 1px 1px;
  }
  .options {
    display: flex;
    align-items: center;
    flex: none;
    height: 34px;
    padding-bottom: 2px;
    border-top: 1px solid #efefef;
    border-bottom: 1px solid #555;
    color: #000;
  }
  .vgrip {
    width: 3px;
    height: 24px;
    margin: 0 9px 0 4px;
    background: repeating-linear-gradient(#999 0 1px, transparent 1px 2px);
  }
  .handbtn {
    display: flex;
    align-items: center;
    gap: 5px;
    height: 100%;
    width: 43px;
    border-right: 1px solid #999;
  }
  .handbtn .caret {
    width: 6px;
  }
  .scrollall {
    display: flex;
    align-items: center;
    gap: 3px;
    height: 26px;
    width: 102px;
    padding-left: 5px;
    border-right: 1px solid #999;
    white-space: nowrap;
  }
  .scrollall input {
    appearance: none;
    width: 11px;
    height: 11px;
    border: 1px solid #222;
    background: #fff;
  }
  .fits {
    display: flex;
    align-items: center;
    gap: 10px;
    height: 26px;
    padding: 0 10px 0 12px;
    border-right: 1px solid #999;
  }
  .fits button {
    width: 80px;
    height: 20px;
    border: 1px solid #a3a3a3;
    background: #dedede;
  }
  .endrule {
    width: 1px;
    height: 27px;
    margin-left: 481px;
    background: #999;
  }

  /* workspace */
  .workspace {
    display: grid;
    grid-template-columns: 37px minmax(0, 1fr) 36px 247px;
    flex: 1;
    min-height: 0;
  }
  .dockhead {
    display: flex;
    align-items: center;
    flex: none;
    height: 12px;
    padding: 0 3px;
    border-bottom: 1px solid #000;
    background: linear-gradient(#3a3a3a, #555);
  }
  .dockhead.right {
    justify-content: flex-end;
  }
  .toolcol,
  .icondock {
    display: flex;
    flex-direction: column;
    background: #646464;
  }
  .toolcol {
    border-right: 1px solid #333;
  }
  .toolbox {
    display: flex;
    flex-direction: column;
    align-items: center;
    background: var(--face);
    padding: 4px 0 12px;
  }
  .hgrip {
    width: 27px;
    height: 3px;
    flex: none;
    background: repeating-linear-gradient(90deg, #999 0 1px, transparent 1px 2px);
  }
  .group {
    display: flex;
    flex-direction: column;
    width: 28px;
    padding: 0 0 2px;
    border-bottom: 2px solid #999;
  }
  .hgrip + .group {
    padding-top: 5px;
  }
  .group:nth-of-type(4) {
    border: 0;
    padding-bottom: 0;
  }
  .tool {
    position: relative;
    width: 26px;
    height: 23px;
    margin-left: 1px;
    display: grid;
    place-items: center;
  }
  .tool .t {
    font: 700 19px/23px 'Liberation Serif', serif;
    color: #555;
  }
  .corner {
    position: absolute;
    right: 1px;
    bottom: 2px;
  }
  .active {
    background: #a5cbe9;
    outline: 1px solid #7db3e6;
    outline-offset: -1px;
  }
  .minis {
    display: flex;
    justify-content: space-between;
    width: 28px;
    margin-top: 5px;
  }
  .swatches {
    display: grid;
    width: 31px;
    height: 31px;
    margin-top: 4px;
  }
  .swatches button {
    grid-area: 1 / 1;
    width: 21px;
    height: 21px;
    border: 1px solid #fff;
    outline: 1px solid #bbb;
    outline-offset: -1px;
  }
  .swatches .bg {
    align-self: end;
    justify-self: end;
    background: #fff;
  }
  .swatches .fg {
    background: #547834;
    border-width: 2px;
  }
  .qmask {
    margin-top: 6px;
  }

  /* document */
  .doc {
    display: flex;
    flex-direction: column;
    min-width: 0;
    border-right: 1px solid #333;
  }
  .doctabs {
    display: flex;
    flex: none;
    height: 20px;
    background: linear-gradient(#9e9e9e, #868686);
    border-bottom: 1px solid #444;
  }
  .doctab {
    display: flex;
    align-items: center;
    gap: 10px;
    padding: 0 5px 0 9px;
    border-right: 1px solid #555;
    background: linear-gradient(#eee, #ccc);
    color: #444;
    white-space: nowrap;
  }
  .doctab button {
    display: grid;
    place-items: center;
    width: 12px;
    height: 12px;
    border: 1px solid #999;
    border-radius: 2px;
    background: #ccc;
  }
  .view {
    display: flex;
    flex: 1;
    min-height: 0;
  }
  .canvas {
    display: grid;
    place-items: center;
    flex: 1;
    background: #c0c0c0;
    overflow: hidden;
  }
  .paper {
    position: relative;
    width: 454px;
    height: 340px;
    background: #fff;
  }
  .wm {
    position: absolute;
    top: 191px;
    left: 45px;
    transform: rotate(-37deg);
    transform-origin: 0 100%;
    white-space: nowrap;
    font-size: 25px;
    line-height: 32px;
    color: rgba(180, 180, 180, 0.35);
  }
  .wm2 {
    left: 233px;
  }
  .wm3 {
    left: 426px;
  }
  .vscroll,
  .pscroll,
  .lscroll {
    display: flex;
    flex-direction: column;
    justify-content: space-between;
    align-items: center;
    width: 15px;
    padding: 4px 0;
    background: #efefef;
  }
  .status {
    display: flex;
    flex: none;
    height: 15px;
    border-top: 1px solid #777;
    line-height: 15px;
    color: #000;
  }
  .pct {
    width: 47px;
    height: 14px;
    padding: 0 0 0 9px;
    border: 0;
    background: #fff;
  }
  .info {
    display: grid;
    place-items: center;
    width: 23px;
    border: solid #888;
    border-width: 0 1px;
  }
  .size {
    width: 171px;
    text-align: center;
    white-space: nowrap;
  }
  .play {
    display: grid;
    place-items: center;
    width: 15px;
    border: solid #888;
    border-width: 0 1px;
  }
  .hscroll {
    display: flex;
    flex: 1;
    justify-content: space-between;
    align-items: center;
    padding: 0 18px 0 3px;
    background: #efefef;
  }

  /* right docks */
  .icondock .dockhead {
    padding-right: 4px;
  }
  .dockbox {
    display: flex;
    flex-direction: column;
    align-items: center;
    gap: 9px;
    width: 35px;
    height: 43px;
    padding-top: 4px;
    background: var(--face);
  }
  .panels {
    display: flex;
    flex-direction: column;
    min-height: 0;
    background: var(--face);
  }
  .panels .dockhead {
    padding-right: 3px;
  }
  .panel {
    border-bottom: 3px solid #333;
  }
  .tabs {
    display: flex;
    height: 18px;
    padding-right: 4px;
    background: linear-gradient(#a0a0a0, #8a8a8a);
    border-bottom: 1px solid #777;
  }
  .tabs button {
    width: 37px;
    height: 17px;
    line-height: 16px;
    border-right: 1px solid #666;
    color: #333;
  }
  .tabs .on {
    width: 36px;
    height: 18px;
    background: linear-gradient(#f0f0f0, #d6d6d6);
    border: 0;
  }
  .tabs .panel-menu {
    width: 14px;
    margin-left: auto;
    border: 0;
  }
  .colorbody {
    display: flex;
    gap: 4px;
    padding: 8px 0 0 8px;
  }
  .swpair {
    display: grid;
    width: 32px;
    height: 33px;
    margin-top: 4px;
  }
  .swpair button {
    grid-area: 1 / 1;
    width: 20px;
    height: 20px;
  }
  .cfg {
    border: 1px solid #000;
    outline: 1px solid #fff;
    outline-offset: -2px;
    background: #547834;
  }
  .cbg {
    align-self: end;
    justify-self: end;
    border: 1px solid #999;
    background: #fff;
  }
  .sliders {
    display: grid;
    gap: 4px;
  }
  .channel {
    display: grid;
    grid-template-columns: 14px 97px 36px;
    align-items: center;
    height: 22px;
    color: #000;
  }
  .channel span {
    padding-top: 2px;
  }
  .channel input[type='text'] {
    width: 36px;
    height: 22px;
    margin-left: 5px;
    padding: 0 0 3px 3px;
    border: 1px solid #777;
    background: #fff;
  }
  input[type='range'] {
    appearance: none;
    width: 97px;
    height: 14px;
    margin: 4px 0 0;
    background: none;
  }
  input[type='range']::-webkit-slider-runnable-track {
    height: 6px;
    margin-bottom: 8px;
    border: 1px solid #999;
    background: linear-gradient(90deg, var(--from), var(--to));
  }
  input[type='range']::-webkit-slider-thumb {
    appearance: none;
    width: 9px;
    height: 7px;
    margin-top: 6px;
    background: url("data:image/svg+xml,%3Csvg xmlns='http://www.w3.org/2000/svg' viewBox='0 0 9 7'%3E%3Cpath d='M4.5 .7 L8.5 4.5 V6.5 H.5 V4.5Z' fill='white' stroke='%23386b38'/%3E%3C/svg%3E");
  }
  .spectrum {
    display: flex;
    justify-content: flex-end;
    width: 199px;
    height: 16px;
    margin: 8px 0 7px 7px;
    border: 1px solid #aaa;
    border-width: 1px 0 0 1px;
    background:
      linear-gradient(rgba(255, 255, 255, 0.9), transparent 50%, rgba(0, 0, 0, 0.85)),
      linear-gradient(90deg, #e60012, #fff100 17%, #009944 32%, #00a0e9 50%, #1d2088 66%, #e4007f 83%, #e60012);
  }
  .spectrum span {
    width: 8px;
    background: linear-gradient(#fff 50%, #000 50%);
  }
  .adjust {
    width: 212px;
    padding-left: 2px;
  }
  h2 {
    margin: 0;
    padding: 6px 0 9px 3px;
    font: inherit;
    line-height: 16px;
    color: #000;
    border-bottom: 1px solid var(--line);
  }
  .adjrow {
    display: flex;
    justify-content: center;
    gap: 5px;
    width: 210px;
    height: 40px;
    padding: 10px 1px 0 0;
    background: linear-gradient(var(--line), var(--line)) center bottom / 120px 1px no-repeat;
  }
  .adjrow:nth-of-type(3) {
    background: none;
  }
  .adjrow button {
    width: 24px;
    height: 20px;
    background: #fff;
  }
  .presets {
    display: flex;
    width: 189px;
    margin: 7px 0 0 10px;
    border-top: 1px solid #777;
    border-left: 1px solid #888;
  }
  ul {
    flex: 1;
    margin: 0;
    padding: 0;
    list-style: none;
    border: solid #000;
    border-width: 1px 1px 0 1px;
  }
  li {
    display: flex;
    align-items: center;
    gap: 8px;
    height: 21px;
    padding-left: 4px;
    border-bottom: 1px solid #000;
    color: #000;
    font-family: 'Liberation Sans', 'Noto Sans CJK SC', sans-serif;
  }
  .adjfoot {
    display: flex;
    justify-content: space-between;
    align-items: center;
    height: 19px;
    margin-top: 10px;
    padding: 0 4px 0 32px;
    border-top: 1px solid var(--line);
  }
  .layers {
    display: flex;
    flex-direction: column;
    flex: 1;
    min-height: 0;
    border-bottom: 1px solid #666;
    margin-bottom: 17px;
  }
  .lrow {
    display: flex;
    align-items: center;
    justify-content: space-between;
    flex: none;
    height: 27px;
    margin: 0 2px;
    padding: 0 2px;
    border-bottom: 1px solid var(--line);
    color: #999;
    white-space: nowrap;
  }
  .blend {
    display: flex;
    align-items: center;
    width: 122px;
    height: 20px;
    background: #fff;
    padding-right: 4px;
  }
  .blend select {
    appearance: none;
    width: 104px;
    height: 18px;
    margin: 1px 5px 1px 1px;
    padding: 0 4px;
    border: 1px solid #ccc;
    background: #fff;
    color: #777;
    opacity: 1;
  }
  .amount {
    display: flex;
    align-items: center;
    text-shadow: 1px 1px #f0f0f0;
  }
  .amount input {
    width: 42px;
    height: 19px;
    margin-left: 3px;
    padding: 0 3px;
    border: 1px solid #aaa;
    background: var(--face);
    color: #777;
  }
  .amount button {
    display: grid;
    place-items: center;
    width: 17px;
    height: 19px;
    border: 1px solid #bbb;
    border-left: 0;
    background: #e2e2e2;
  }
  .locks {
    display: flex;
    align-items: center;
    gap: 6px;
    padding-left: 4px;
    text-shadow: 1px 1px #f0f0f0;
  }
  .layerlist {
    display: flex;
    flex: 1;
    min-height: 0;
    padding-right: 2px;
  }
  .rows {
    flex: 1;
    padding-left: 2px;
  }
  .layer {
    display: flex;
    align-items: center;
    height: 33px;
    border-bottom: 1px solid var(--line);
  }
  .eye {
    display: grid;
    place-items: center;
    width: 16px;
    height: 16px;
    margin: 0 4px 0 2px;
    border: 1px solid;
    border-color: #999 #eee #eee #999;
  }
  .selected {
    display: flex;
    align-items: center;
    flex: 1;
    height: 32px;
    padding: 0 16px 0 3px;
    background: #0078d7;
    color: #fff;
  }
  .thumb {
    width: 32px;
    height: 25px;
    border: 1px solid #000;
    background: #fff;
  }
  em {
    flex: 1;
    margin-left: 10px;
  }

  /* floating monitor */
  .monitor {
    position: absolute;
    right: 12px;
    bottom: 126px;
    display: flex;
    align-items: center;
    width: 119px;
    height: 60px;
  }
  .pill {
    position: absolute;
    right: 0;
    width: 80px;
    height: 42px;
    padding-left: 23px;
    border-radius: 0 21px 21px 0;
    background: #2e323d;
    box-shadow: 0 0 5px rgba(0, 0, 0, 0.5);
  }
  p {
    display: flex;
    align-items: center;
    height: 21px;
    margin: 0;
    color: #fff;
  }
  p + p {
    border-top: 1px solid #414652;
  }
  p b {
    width: 25px;
    text-align: right;
    font-weight: 600;
  }
  p span {
    color: #8b90a0;
    font-size: 10px;
  }
  .disc {
    position: relative;
    display: flex;
    align-items: center;
    justify-content: center;
    width: 60px;
    height: 60px;
    border-radius: 50%;
    background: linear-gradient(#4a4f5d, #5a5f6d);
    border: 1px solid #333846;
    box-shadow: 0 0 6px rgba(0, 0, 0, 0.5);
    color: #fff;
  }
  .disc svg {
    position: absolute;
    inset: -1px;
  }
  .disc strong {
    font: 300 24px/30px Roboto, sans-serif;
  }
  .disc small {
    font-size: 10px;
    line-height: 20px;
    padding-top: 10px;
  }

  .ime {
    position: absolute;
    right: -2px;
    bottom: 0;
    display: flex;
    align-items: center;
    height: 20px;
    padding-left: 34px;
    gap: 6px;
    background: #fff;
  }
  .sogou {
    position: absolute;
    left: 0;
    bottom: 0;
  }
  .zh {
    font: 700 15px/18px 'Noto Sans CJK SC', sans-serif;
    color: #1d72c4;
  }
</style>
